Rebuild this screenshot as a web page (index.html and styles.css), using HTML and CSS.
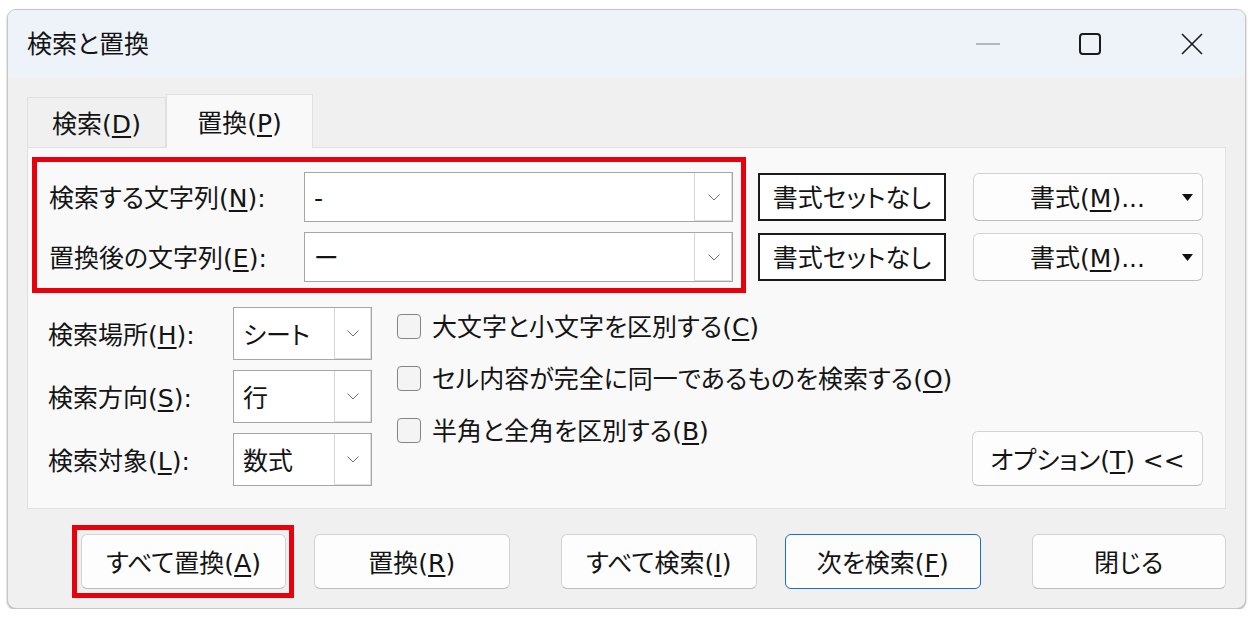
FILE: index.html
```html
<!DOCTYPE html>
<html lang="ja">
<head>
    <meta charset="UTF-8">
    <meta name="viewport" content="width=device-width, initial-scale=1.0">
    <title>検索と置換</title>
    <link rel="stylesheet" href="styles.css">
</head>
<body>
    <div class="dialog">
        <div class="titlebar">
            <span class="title">検索と置換</span>
            <div class="caption">
                <span class="cap-btn"><svg width="24" height="2" viewBox="0 0 24 2"><line x1="0" y1="1" x2="24" y2="1" stroke="#a3a3a3" stroke-width="1.5"/></svg></span>
                <span class="cap-btn"><svg width="22" height="22" viewBox="0 0 22 22"><rect x="1" y="1" width="20" height="20" rx="3" fill="none" stroke="#1a1a1a" stroke-width="2"/></svg></span>
                <span class="cap-btn"><svg width="22" height="22" viewBox="0 0 22 22"><path d="M1 1L21 21M21 1L1 21" stroke="#1a1a1a" stroke-width="1.6"/></svg></span>
            </div>
        </div>

        <div class="content">
            <div class="tabs">
                <div class="tab">検索(<u>D</u>)</div>
                <div class="tab active">置換(<u>P</u>)</div>
            </div>

            <div class="panel">
                <div class="top-row">
                    <div class="highlight find-replace">
                        <div class="field-row">
                            <label>検索する文字列(<u>N</u>):</label>
                            <div class="combo wide">
                                <span class="value">-</span>
                                <span class="drop"><svg width="12" height="7" viewBox="0 0 12 7"><polyline points="0.5,0.5 6,6 11.5,0.5" fill="none" stroke="#707070" stroke-width="1"/></svg></span>
                            </div>
                        </div>
                        <div class="field-row">
                            <label>置換後の文字列(<u>E</u>):</label>
                            <div class="combo wide">
                                <span class="value">ー</span>
                                <span class="drop"><svg width="12" height="7" viewBox="0 0 12 7"><polyline points="0.5,0.5 6,6 11.5,0.5" fill="none" stroke="#707070" stroke-width="1"/></svg></span>
                            </div>
                        </div>
                    </div>

                    <div class="format-grid">
                        <button class="fmt-clear">書式セットなし</button>
                        <button class="btn fmt"><span>書式(<u>M</u>)...</span><svg width="11" height="7" viewBox="0 0 11 7"><polygon points="0,0 11,0 5.5,7" fill="#111"/></svg></button>
                        <button class="fmt-clear">書式セットなし</button>
                        <button class="btn fmt"><span>書式(<u>M</u>)...</span><svg width="11" height="7" viewBox="0 0 11 7"><polygon points="0,0 11,0 5.5,7" fill="#111"/></svg></button>
                    </div>
                </div>

                <div class="lower">
                    <div class="fields">
                        <div class="field-row small">
                            <label>検索場所(<u>H</u>):</label>
                            <div class="combo">
                                <span class="value">シート</span>
                                <span class="drop"><svg width="12" height="7" viewBox="0 0 12 7"><polyline points="0.5,0.5 6,6 11.5,0.5" fill="none" stroke="#707070" stroke-width="1"/></svg></span>
                            </div>
                        </div>
                        <div class="field-row small">
                            <label>検索方向(<u>S</u>):</label>
                            <div class="combo">
                                <span class="value">行</span>
                                <span class="drop"><svg width="12" height="7" viewBox="0 0 12 7"><polyline points="0.5,0.5 6,6 11.5,0.5" fill="none" stroke="#707070" stroke-width="1"/></svg></span>
                            </div>
                        </div>
                        <div class="field-row small">
                            <label>検索対象(<u>L</u>):</label>
                            <div class="combo">
                                <span class="value">数式</span>
                                <span class="drop"><svg width="12" height="7" viewBox="0 0 12 7"><polyline points="0.5,0.5 6,6 11.5,0.5" fill="none" stroke="#707070" stroke-width="1"/></svg></span>
                            </div>
                        </div>
                    </div>

                    <div class="checks">
                        <div class="check"><span class="box"></span><span class="text">大文字と小文字を区別する(<u>C</u>)</span></div>
                        <div class="check"><span class="box"></span><span class="text">セル内容が完全に同一であるものを検索する(<u>O</u>)</span></div>
                        <div class="check"><span class="box"></span><span class="text">半角と全角を区別する(<u>B</u>)</span></div>
                    </div>

                    <button class="btn opt-toggle">オプション(<u>T</u>) &lt;&lt;</button>
                </div>
            </div>

            <div class="actions">
                <div class="highlight replace-all">
                    <button class="btn">すべて置換(<u>A</u>)</button>
                </div>
                <button class="btn">置換(<u>R</u>)</button>
                <button class="btn wide-gap find-all">すべて検索(<u>I</u>)</button>
                <button class="btn default">次を検索(<u>F</u>)</button>
                <button class="btn wide-gap close">閉じる</button>
            </div>
        </div>
    </div>
</body>
</html>
```

FILE: styles.css
```css
* {
    box-sizing: border-box;
}
body {
    margin: 0;
    background: #fff;
    font-family: "DejaVu Sans", "Noto Sans CJK JP", sans-serif;
    font-size: 25px;
    line-height: 1.2;
    color: #141414;
    font-feature-settings: "palt";
}
u {
    text-decoration-thickness: 1.5px;
    text-underline-offset: 3px;
}
.dialog {
    width: 1239px;
    height: 600px;
    margin: 9px 0 0 7px;
    border: 1px solid #c6c6c6;
    border-radius: 9px;
    background: #f0f0f0;
    overflow: hidden;
    box-shadow: 0 1px 2px rgba(0, 0, 0, 0.35);
}

/* title bar */
.titlebar {
    height: 67px;
    background: #eef2f9;
    display: flex;
    align-items: center;
    padding-left: 19px;
}
.title {
    padding-top: 2px;
}
.caption {
    margin-left: auto;
    display: flex;
    height: 100%;
    padding-right: 2px;
}
.cap-btn {
    width: 102px;
    display: flex;
    align-items: center;
    justify-content: center;
}

.content {
    padding: 0 19px;
}

/* tabs */
.tabs {
    display: flex;
    align-items: flex-end;
    height: 70px;
}
.tab {
    width: 139px;
    height: 50px;
    padding-top: 4px;
    display: flex;
    align-items: center;
    justify-content: center;
    border: 1px solid #e0e0e0;
    border-bottom: none;
    background: #f0f0f0;
}
.tab.active {
    width: 147px;
    height: 54px;
    margin-bottom: -1px;
    background: #f9f9f9;
    position: relative;
    z-index: 1;
}

.panel {
    border: 1px solid #e1e1e1;
    background: #f9f9f9;
    padding: 9px 0 22px 4px;
}
.top-row {
    display: flex;
    align-items: flex-start;
}
.highlight {
    border: 5px solid #e8000c;
}
.find-replace {
    width: 714px;
    padding: 10px 8px 6px 12px;
    display: flex;
    flex-direction: column;
    gap: 10px;
}
.field-row {
    display: flex;
    align-items: center;
    height: 50px;
}
.field-row label {
    width: 255px;
    padding-top: 4px;
}
.combo {
    display: flex;
    height: 100%;
    width: 139px;
    background: #fff;
    border: 1px solid #a6a6a6;
}
.combo.wide {
    width: 429px;
}
.combo .value {
    flex: 1;
    padding: 4px 0 0 9px;
    display: flex;
    align-items: center;
}
.combo .drop {
    width: 38px;
    display: flex;
    align-items: center;
    justify-content: center;
    border-left: 1px solid #d6d6d6;
    box-shadow: inset -1px -1px 0 #dedede;
}

/* format buttons */
.format-grid {
    display: grid;
    grid-template-columns: 188px 230px;
    grid-auto-rows: 48px;
    column-gap: 27px;
    row-gap: 12px;
    margin: 16px 0 0 12px;
}
button {
    font: inherit;
    color: inherit;
    padding: 0;
    cursor: pointer;
}
.fmt-clear {
    background: #fff;
    border: 2px solid #1a1a1a;
    padding-top: 4px;
}
.btn {
    background: #fdfdfd;
    border: 1px solid #d3d3d3;
    border-bottom-color: #bdbdbd;
    border-radius: 6px;
    display: flex;
    align-items: center;
    justify-content: center;
    padding-top: 4px;
}
.fmt {
    padding: 0 9px 0 19px;
}
.fmt span {
    flex: 1;
    text-align: center;
    padding-top: 4px;
}

/* lower options */
.lower {
    display: flex;
    margin-top: 14px;
    padding-left: 16px;
    height: 179px;
}
.fields {
    display: flex;
    flex-direction: column;
    gap: 10px;
}
.field-row.small {
    height: 53px;
}
.field-row.small label {
    width: 185px;
}
.field-row.small .drop {
    width: 37px;
}
.checks {
    margin-left: 25px;
    padding-top: 6px;
    display: flex;
    flex-direction: column;
    gap: 26px;
}
.check {
    display: flex;
    align-items: center;
    height: 26px;
    gap: 11px;
}
.check .text {
    padding-top: 4px;
}
.box {
    width: 24px;
    height: 25px;
    border: 1.5px solid #858585;
    border-radius: 4px;
    background: #f4f4f4;
}
.opt-toggle {
    margin-left: auto;
    margin-right: 22px;
    align-self: flex-end;
    width: 231px;
    height: 55px;
}

/* bottom buttons */
.actions {
    display: flex;
    align-items: center;
    margin-top: 16px;
    padding-left: 45px;
}
.actions .btn {
    width: 196px;
    height: 55px;
}
.replace-all {
    padding: 4px 3px 4px 4px;
    margin-right: 20px;
}
.actions .replace-all .btn {
    width: 205px;
}
.wide-gap {
    margin-left: 51px;
}
.actions .find-all {
    width: 197px;
    margin-right: 28px;
}
.actions .close {
    width: 195px;
}
.default {
    border: 1.5px solid #1a6fc4;
}
```
